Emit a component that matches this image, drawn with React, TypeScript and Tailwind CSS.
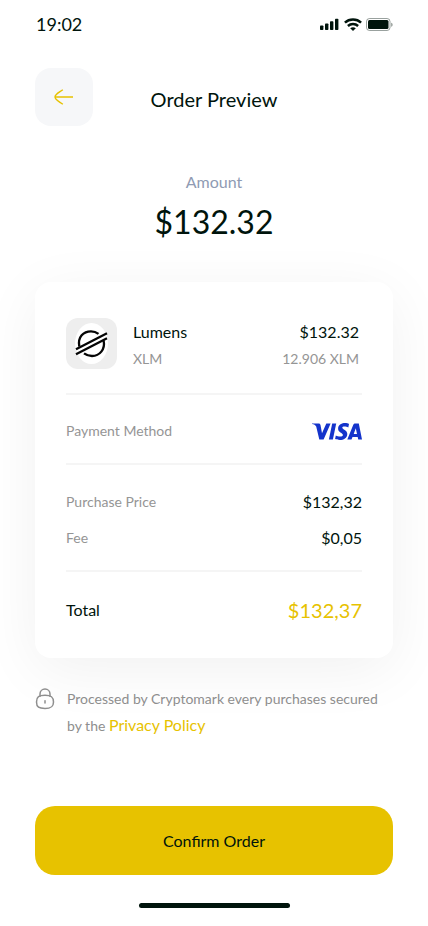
import React from "react";

function StatusBar() {
  return (
    <div className="flex h-12 items-center justify-between pr-[35px] pl-9">
      <time className="text-lg leading-6">19:02</time>
      <div className="flex items-center gap-1">
        <svg width="20" height="12" viewBox="0 0 20 12" fill="#00140c" aria-hidden="true">
          <rect x="0" y="7.5" width="3.4" height="4.500" rx="0.8" />
          <rect x="5" y="5.500" width="3.4" height="6.500" rx="0.8" />
          <rect x="10" y="3.2" width="3.4" height="8.800" rx="0.8" />
          <rect x="15" y="0.800" width="3.4" height="11.200" rx="0.8" />
        </svg>
        <svg width="18" height="13" viewBox="0 0 18 13" fill="none" stroke="#00140c" strokeWidth="2.5" aria-hidden="true">
          <path d="M0.900 4.700C5.400 0.500 12.600 0.500 17.100 4.700" />
          <path d="M3.900 8C6.800 5.400 11.200 5.400 14.100 8" />
          <path d="M6.200 10.300C7.900 8.900 10.100 8.900 11.800 10.300L9 13Z" fill="#00140c" stroke="none" />
        </svg>
        <svg width="27" height="13" viewBox="0 0 27 13" aria-hidden="true">
          <rect x="0.5" y="0.5" width="23.500" height="12" rx="3" fill="#fff" stroke="#00140c" strokeOpacity="0.4" />
          <rect x="2" y="2" width="20.500" height="9" rx="1.500" fill="#00140c" />
          <path d="M25.200 4.700v4c0.900-0.400 1.400-1.100 1.400-2s-0.500-1.600-1.400-2z" fill="#00140c" fillOpacity="0.45" />
        </svg>
      </div>
    </div>
  );
}

function ArrowIcon() {
  return (
    <svg width="20" height="16" viewBox="0 0 20 16" fill="none" stroke="#e7c200" strokeWidth="1.4" aria-hidden="true">
      <path d="M19 8H0.800M8.800 0.700C6.500 2.800 1 4.800 1 8C1 11.200 6.500 13.200 8.800 15.300" />
    </svg>
  );
}

function StellarIcon() {
  return (
    <svg width="33" height="41" viewBox="0 0 33 41" fill="none" aria-hidden="true">
      <ellipse cx="16.500" cy="20.500" rx="16.500" ry="20.500" fill="#fff" />
      <g stroke="#050505" strokeWidth="2.300">
        <path d="M4.300 23.500C2.500 14 8.500 8.300 16 8.300C18.800 8.300 21.300 9.200 23.500 10.900" />
        <path d="M28.600 17.500C30.500 26.500 24.500 33 17 33C13.900 33 11.300 32 9 30.300" />
        <path d="M1 26.200L32 10.200M1 31.200L32 15.200" />
      </g>
    </svg>
  );
}

function VisaLogo() {
  return (
    <svg width="50" height="17" viewBox="0 0 50 17" fill="#1434cb" role="img" aria-label="Visa">
      <path d="M0 0.500H6.600C7.700 0.500 8.300 1 8.500 2.100L10 10.300L14.300 0.500H18.600L11.600 16.500H7.300L4.200 3.600C3.800 2 1.800 1.200 0 0.900Z" />
      <path d="M20.200 0.500H24.200L20.900 16.500H16.900Z" />
      <path d="M37 1.100L36.300 4.400C34.300 3.500 30.400 3 30.300 4.700C30.200 6.400 35.400 6.900 35.300 11C35.200 15 31.700 17 27.800 17C25.900 17 24.100 16.600 23.100 16.100L23.800 12.600C26.300 13.900 30.800 14.200 30.900 12C31 10 26 9.800 26.100 5.600C26.200 1.500 30.100 0.100 33 0.100C34.700 0.100 36.100 0.500 37 1.100Z" />
      <path fillRule="evenodd" d="M43.300 0.500H46.800L50 16.500H46.200L45.700 14.100H40.500L39.500 16.500H35.300L41.300 1.800C41.700 0.900 42.300 0.500 43.300 0.500ZM43.800 5.200L41.700 10.900H45Z" />
    </svg>
  );
}

function LockIcon() {
  return (
    <svg className="mt-0.5 shrink-0" width="20" height="22" viewBox="0 0 20 22" fill="none" stroke="#8e8e8e" strokeWidth="1.500" strokeLinecap="round" aria-hidden="true">
      <path d="M5 8.200V6C5 3.200 7.200 1 10 1S15 3.200 15 6V8.200" />
      <path d="M10 7.300C4 7.300 1.500 8.800 1.500 14S4 20.500 10 20.500S18.500 19 18.500 14S16 7.300 10 7.300Z" />
      <path d="M10 12.700V15" />
    </svg>
  );
}

function Detail({ label, value }: { label: string; value: string }) {
  return (
    <div className="flex h-9 items-center justify-between">
      <dt className="text-sm text-[#959595]">{label}</dt>
      <dd className="text-base">{value}</dd>
    </div>
  );
}

export default function App() {
  return (
    <div className="min-h-screen bg-white font-[Lato,sans-serif] text-[#00140c]">
      <StatusBar />

      <main className="px-[35px]">
        <header className="mt-5 grid grid-cols-[58px_1fr_58px] items-center">
          <button type="button" aria-label="Back" className="flex h-[58px] items-center justify-center rounded-2xl bg-[#f6f7f9]">
            <ArrowIcon />
          </button>
          <h1 className="pt-1 text-center text-xl">Order Preview</h1>
        </header>

        <section className="mt-11 text-center">
          <h2 className="text-base text-[#8f9bb3]">Amount</h2>
          <p className="mt-2 text-[32px] leading-10">$132.32</p>
        </section>

        <section className="mt-10 rounded-2xl bg-white px-[31px] pt-9 pb-2.5 shadow-[0_12px_60px_rgba(0,0,0,0.06)]">
          <div className="flex items-start pb-[21px]">
            <div className="flex size-[51px] items-center justify-center rounded-xl bg-[#eeeeee]">
              <StellarIcon />
            </div>
            <div className="ml-4 flex-1">
              <p className="text-base leading-[27px]">Lumens</p>
              <p className="text-sm leading-[27px] text-[#959595]">XLM</p>
            </div>
            <div className="pr-[3px] text-right">
              <p className="text-base leading-[27px]">$132.32</p>
              <p className="text-sm leading-[27px] text-[#959595]">12.906 XLM</p>
            </div>
          </div>

          <div className="flex h-[72px] items-center justify-between border-y-2 border-[#f5f5f5] pt-1">
            <span className="text-sm text-[#959595]">Payment Method</span>
            <VisaLogo />
          </div>

          <dl className="pt-[19px]">
            <Detail label="Purchase Price" value="$132,32" />
            <Detail label="Fee" value="$0,05" />
            <div className="mt-3.5 flex h-[78px] items-center justify-between border-t-2 border-[#f5f5f5]">
              <dt className="text-base">Total</dt>
              <dd className="text-xl text-[#e7c200]">$132,37</dd>
            </div>
          </dl>
        </section>

        <div className="mt-7 flex gap-3">
          <LockIcon />
          <p className="text-sm leading-[26px] text-[#8e8e8e]">
            Processed by Cryptomark every purchases secured by the{" "}
            <a href="#privacy" className="text-base leading-[26px] text-[#e7c200]">Privacy Policy</a>
          </p>
        </div>

        <button type="button" className="mt-[67px] h-[69px] w-full rounded-[20px] bg-[#e7c200] text-base">
          Confirm Order
        </button>
      </main>

      <div className="mx-auto mt-7 h-[5px] w-[151px] rounded-full bg-[#00140c]" />
    </div>
  );
}
